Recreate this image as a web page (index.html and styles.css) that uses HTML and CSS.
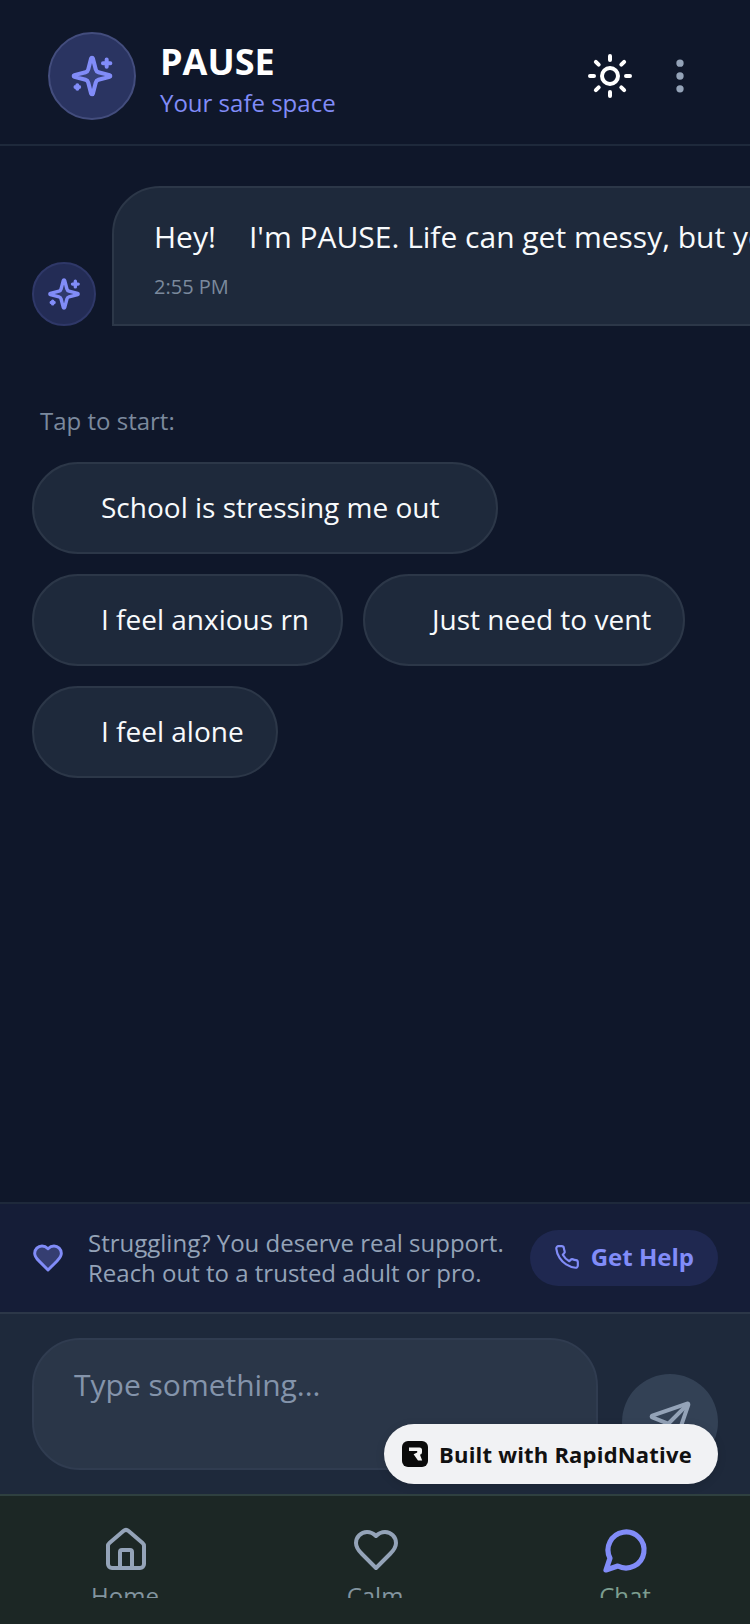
FILE: index.html
```html
<!DOCTYPE html>
<html lang="en">
<head>
<meta charset="utf-8">
<title>PAUSE</title>
<link rel="stylesheet" href="styles.css">
</head>
<body>
<div class="app">
  <header class="header">
    <div class="brand">
      <div class="avatar avatar-lg">
        <svg class="icon spark-lg" viewBox="0 0 24 24"><path d="M9.937 15.5A2 2 0 0 0 8.5 14.063l-6.135-1.582a.5.5 0 0 1 0-.962L8.5 9.936A2 2 0 0 0 9.937 8.5l1.582-6.135a.5.5 0 0 1 .963 0L14.063 8.5A2 2 0 0 0 15.5 9.937l6.135 1.581a.5.5 0 0 1 0 .964L15.5 14.063a2 2 0 0 0-1.437 1.437l-1.582 6.135a.5.5 0 0 1-.963 0z"/><path d="M20 3v4M22 5h-4M4 17v2M5 18H3"/></svg>
      </div>
      <div class="brand-text">
        <div class="title">PAUSE</div>
        <div class="subtitle">Your safe space</div>
      </div>
    </div>
    <div class="actions">
      <svg class="icon sun" viewBox="0 0 24 24"><circle cx="12" cy="12" r="4"/><path d="M12 2v2M12 20v2M4.93 4.93l1.41 1.41M17.66 17.66l1.41 1.41M2 12h2M20 12h2M6.34 17.66l-1.41 1.41M19.07 4.93l-1.41 1.41"/></svg>
      <svg class="icon more" viewBox="0 0 24 24"><circle cx="12" cy="5" r="1"/><circle cx="12" cy="12" r="1"/><circle cx="12" cy="19" r="1"/></svg>
    </div>
  </header>

  <main class="chat">
    <div class="message">
      <div class="avatar avatar-sm">
        <svg class="icon spark-sm" viewBox="0 0 24 24"><path d="M9.937 15.5A2 2 0 0 0 8.5 14.063l-6.135-1.582a.5.5 0 0 1 0-.962L8.5 9.936A2 2 0 0 0 9.937 8.5l1.582-6.135a.5.5 0 0 1 .963 0L14.063 8.5A2 2 0 0 0 15.5 9.937l6.135 1.581a.5.5 0 0 1 0 .964L15.5 14.063a2 2 0 0 0-1.437 1.437l-1.582 6.135a.5.5 0 0 1-.963 0z"/><path d="M20 3v4M22 5h-4M4 17v2M5 18H3"/></svg>
      </div>
      <div class="bubble">
        <div class="bubble-text">Hey!<span class="emoji-gap"></span>I'm PAUSE. Life can get messy, but you've got this.</div>
        <div class="time">2:55 PM</div>
      </div>
    </div>

    <div class="prompt">Tap to start:</div>
    <div class="chips">
      <button class="chip chip-wide">School is stressing me out</button>
      <button class="chip">I feel anxious rn</button>
      <button class="chip">Just need to vent</button>
      <button class="chip">I feel alone</button>
    </div>
  </main>

  <section class="banner">
    <svg class="icon banner-heart" viewBox="0 0 24 24"><path d="M19 14c1.49-1.46 3-3.21 3-5.5A5.5 5.5 0 0 0 16.5 3c-1.76 0-3 .5-4.5 2-1.5-1.5-2.74-2-4.5-2A5.5 5.5 0 0 0 2 8.5c0 2.3 1.5 4.05 3 5.5l7 7Z"/></svg>
    <p class="banner-text">Struggling? You deserve real support.<br>Reach out to a trusted adult or pro.</p>
    <button class="help">
      <svg class="icon phone" viewBox="0 0 24 24"><path d="M22 16.92v3a2 2 0 0 1-2.18 2 19.79 19.79 0 0 1-8.63-3.07 19.5 19.5 0 0 1-6-6 19.79 19.79 0 0 1-3.07-8.67A2 2 0 0 1 4.11 2h3a2 2 0 0 1 2 1.72 12.84 12.84 0 0 0 .7 2.81 2 2 0 0 1-.45 2.11L8.09 9.91a16 16 0 0 0 6 6l1.27-1.27a2 2 0 0 1 2.11-.45 12.84 12.84 0 0 0 2.81.7A2 2 0 0 1 22 16.92z"/></svg>
      Get Help
    </button>
  </section>

  <section class="composer">
    <div class="input">Type something...</div>
    <button class="send">
      <svg class="icon send-icon" viewBox="0 0 24 24"><path d="M14.536 21.686a.5.5 0 0 0 .937-.024l6.5-19a.496.496 0 0 0-.635-.635l-19 6.5a.5.5 0 0 0-.024.937l7.93 3.18a2 2 0 0 1 1.112 1.11z"/><path d="m21.854 2.147-10.94 10.939"/></svg>
    </button>
    <div class="badge">
      <svg class="badge-logo" viewBox="0 0 26 26"><rect width="26" height="26" rx="6" fill="#0b0b0b"/><path d="M7 6.5h10.5a2.5 2.5 0 0 1 2.5 2.5v2.2a2.6 2.6 0 0 1-2 2.5l2.2 5.8h-4.2l-4.4-6.3 3.6-1.7v-1.5H7z" fill="#f5f5f5"/></svg>
      <span>Built with RapidNative</span>
    </div>
  </section>

  <nav class="tabs">
    <div class="tab">
      <svg class="icon tab-icon" viewBox="0 0 24 24"><path d="M15 21v-8a1 1 0 0 0-1-1h-4a1 1 0 0 0-1 1v8"/><path d="M3 10a2 2 0 0 1 .709-1.528l7-5.999a2 2 0 0 1 2.582 0l7 5.999A2 2 0 0 1 21 10v9a2 2 0 0 1-2 2H5a2 2 0 0 1-2-2z"/></svg>
      <div class="tab-label">Home</div>
    </div>
    <div class="tab">
      <svg class="icon tab-icon" viewBox="0 0 24 24"><path d="M19 14c1.49-1.46 3-3.21 3-5.5A5.5 5.5 0 0 0 16.5 3c-1.76 0-3 .5-4.5 2-1.5-1.5-2.74-2-4.5-2A5.5 5.5 0 0 0 2 8.5c0 2.3 1.5 4.05 3 5.5l7 7Z"/></svg>
      <div class="tab-label">Calm</div>
    </div>
    <div class="tab tab-active">
      <svg class="icon tab-icon" viewBox="0 0 24 24"><path d="M7.9 20A9 9 0 1 0 4 16.1L2 22Z"/></svg>
      <div class="tab-label">Chat</div>
    </div>
  </nav>
</div>
</body>
</html>
```
FILE: styles.css
```css
* { box-sizing: border-box; }
html, body { margin: 0; padding: 0; }
body {
  width: 750px;
  height: 1624px;
  overflow: hidden;
  background: #0f172a;
  font-family: "Open Sans", "Noto Sans", sans-serif;
  color: #fff;
}
button { font-family: inherit; border: 0; padding: 0; margin: 0; }
p { margin: 0; }
.app { display: flex; flex-direction: column; width: 750px; height: 1624px; }
.icon { display: block; fill: none; stroke: currentColor; stroke-width: 2; stroke-linecap: round; stroke-linejoin: round; flex: none; }

.header {
  height: 146px;
  flex: none;
  display: flex;
  align-items: center;
  justify-content: space-between;
  padding: 8px 48px 0 48px;
  border-bottom: 2px solid #1e293b;
}
.brand { display: flex; align-items: center; gap: 24px; }
.avatar { display: flex; align-items: center; justify-content: center; border-radius: 50%; background: #2a3461; flex: none; }
.avatar-lg { width: 88px; height: 88px; border: 2px solid #434d7d; }
.avatar-sm { width: 64px; height: 64px; border: 2px solid #2f3868; background: #232c55; }
.spark-lg { width: 44px; height: 44px; color: #818cf8; fill: rgba(129,140,248,.15); stroke-width: 2.2; }
.spark-sm { width: 34px; height: 34px; color: #818cf8; fill: rgba(129,140,248,.15); stroke-width: 2.4; }
.brand-text { display: flex; flex-direction: column; margin-top: 8px; }
.title { font-size: 36px; font-weight: 700; line-height: 46px; }
.subtitle { font-size: 24px; line-height: 36px; color: #818cf8; }
.actions { display: flex; align-items: center; gap: 24px; }
.sun { width: 48px; height: 48px; color: #fff; }
.more { width: 44px; height: 44px; color: #94a3b8; fill: #94a3b8; stroke-width: 2; }

.chat { flex: 1; min-height: 0; overflow: hidden; padding: 40px 0 0 32px; }
.message { display: flex; align-items: flex-end; gap: 16px; }
.bubble {
  flex: none;
  width: 900px;
  height: 140px;
  padding: 28px 40px 0;
  background: #1e293b;
  border: 2px solid #2c3748;
  border-radius: 48px 48px 48px 0;
}
.bubble-text { font-size: 30px; line-height: 42px; white-space: nowrap; color: #f8fafc; }
.emoji-gap { display: inline-block; width: 33px; }
.time { font-size: 20px; line-height: 28px; margin-top: 15px; color: #7b899d; }
.prompt { font-size: 24px; line-height: 32px; color: #7b899d; margin: 79px 0 0 8px; }
.chips { display: flex; flex-wrap: wrap; gap: 20px; margin-top: 25px; width: 700px; }
.chip {
  height: 92px;
  padding: 0 32px 2px 67px;
  border-radius: 46px;
  background: #1e293b;
  border: 2px solid #2c3748;
  color: #f8fafc;
  font-size: 28px;
  white-space: nowrap;
}
.chip-wide { padding-right: 57px; }

.banner {
  height: 112px;
  flex: none;
  display: flex;
  align-items: center;
  padding: 0 32px;
  background: #151d37;
  border-top: 2px solid #1e293b;
  border-bottom: 2px solid #2c3748;
}
.banner-heart { width: 32px; height: 32px; color: #818cf8; fill: rgba(129,140,248,.3); stroke-width: 2.2; }
.banner-text { font-size: 24px; line-height: 30px; color: #94a3b8; margin-left: 24px; flex: 1; white-space: nowrap; }
.help {
  display: flex;
  align-items: center;
  gap: 11px;
  height: 56px;
  padding: 0 24px 3px;
  border-radius: 28px;
  background: #1f2850;
  color: #818cf8;
  font-size: 24px;
  font-weight: 700;
}
.phone { width: 26px; height: 26px; }

.composer {
  position: relative;
  flex: none;
  height: 180px;
  display: flex;
  align-items: flex-end;
  gap: 24px;
  padding: 0 32px 24px;
  background: #1e293b;
}
.input {
  width: 566px;
  height: 132px;
  padding: 24px 40px;
  background: #2a3648;
  border: 2px solid #303c50;
  border-radius: 48px;
  font-size: 30px;
  line-height: 42px;
  color: #8494ab;
}
.send { width: 96px; height: 96px; border-radius: 50%; background: #334155; color: #94a3b8; display: flex; align-items: center; justify-content: center; }
.send-icon { width: 44px; height: 44px; stroke-width: 2.2; }
.badge {
  position: absolute;
  right: 32px;
  top: 110px;
  width: 334px;
  height: 60px;
  display: flex;
  align-items: center;
  gap: 11px;
  padding: 0 0 1px 18px;
  border-radius: 30px;
  background: #f1f2f4;
  box-shadow: 0 2px 10px rgba(0,0,0,.12);
  color: #111;
  font-size: 22px;
  font-weight: 700;
  letter-spacing: .2px;
  white-space: nowrap;
}
.badge-logo { width: 26px; height: 26px; flex: none; }

.tabs {
  flex: none;
  height: 130px;
  display: flex;
  background: #1c2725;
  border-top: 2px solid #2f4040;
}
.tab { flex: 1; display: flex; flex-direction: column; align-items: center; padding-top: 30px; color: #94a3b8; }
.tab-icon { width: 48px; height: 48px; margin-left: 2px; }
.tab-label { font-size: 24px; line-height: 32px; height: 18px; overflow: hidden; margin-top: 6px; color: #82949f; }
.tab-active .tab-icon { color: #818cf8; stroke-width: 2.6; }
.tab-active .tab-label { color: #7d9e90; }
```
